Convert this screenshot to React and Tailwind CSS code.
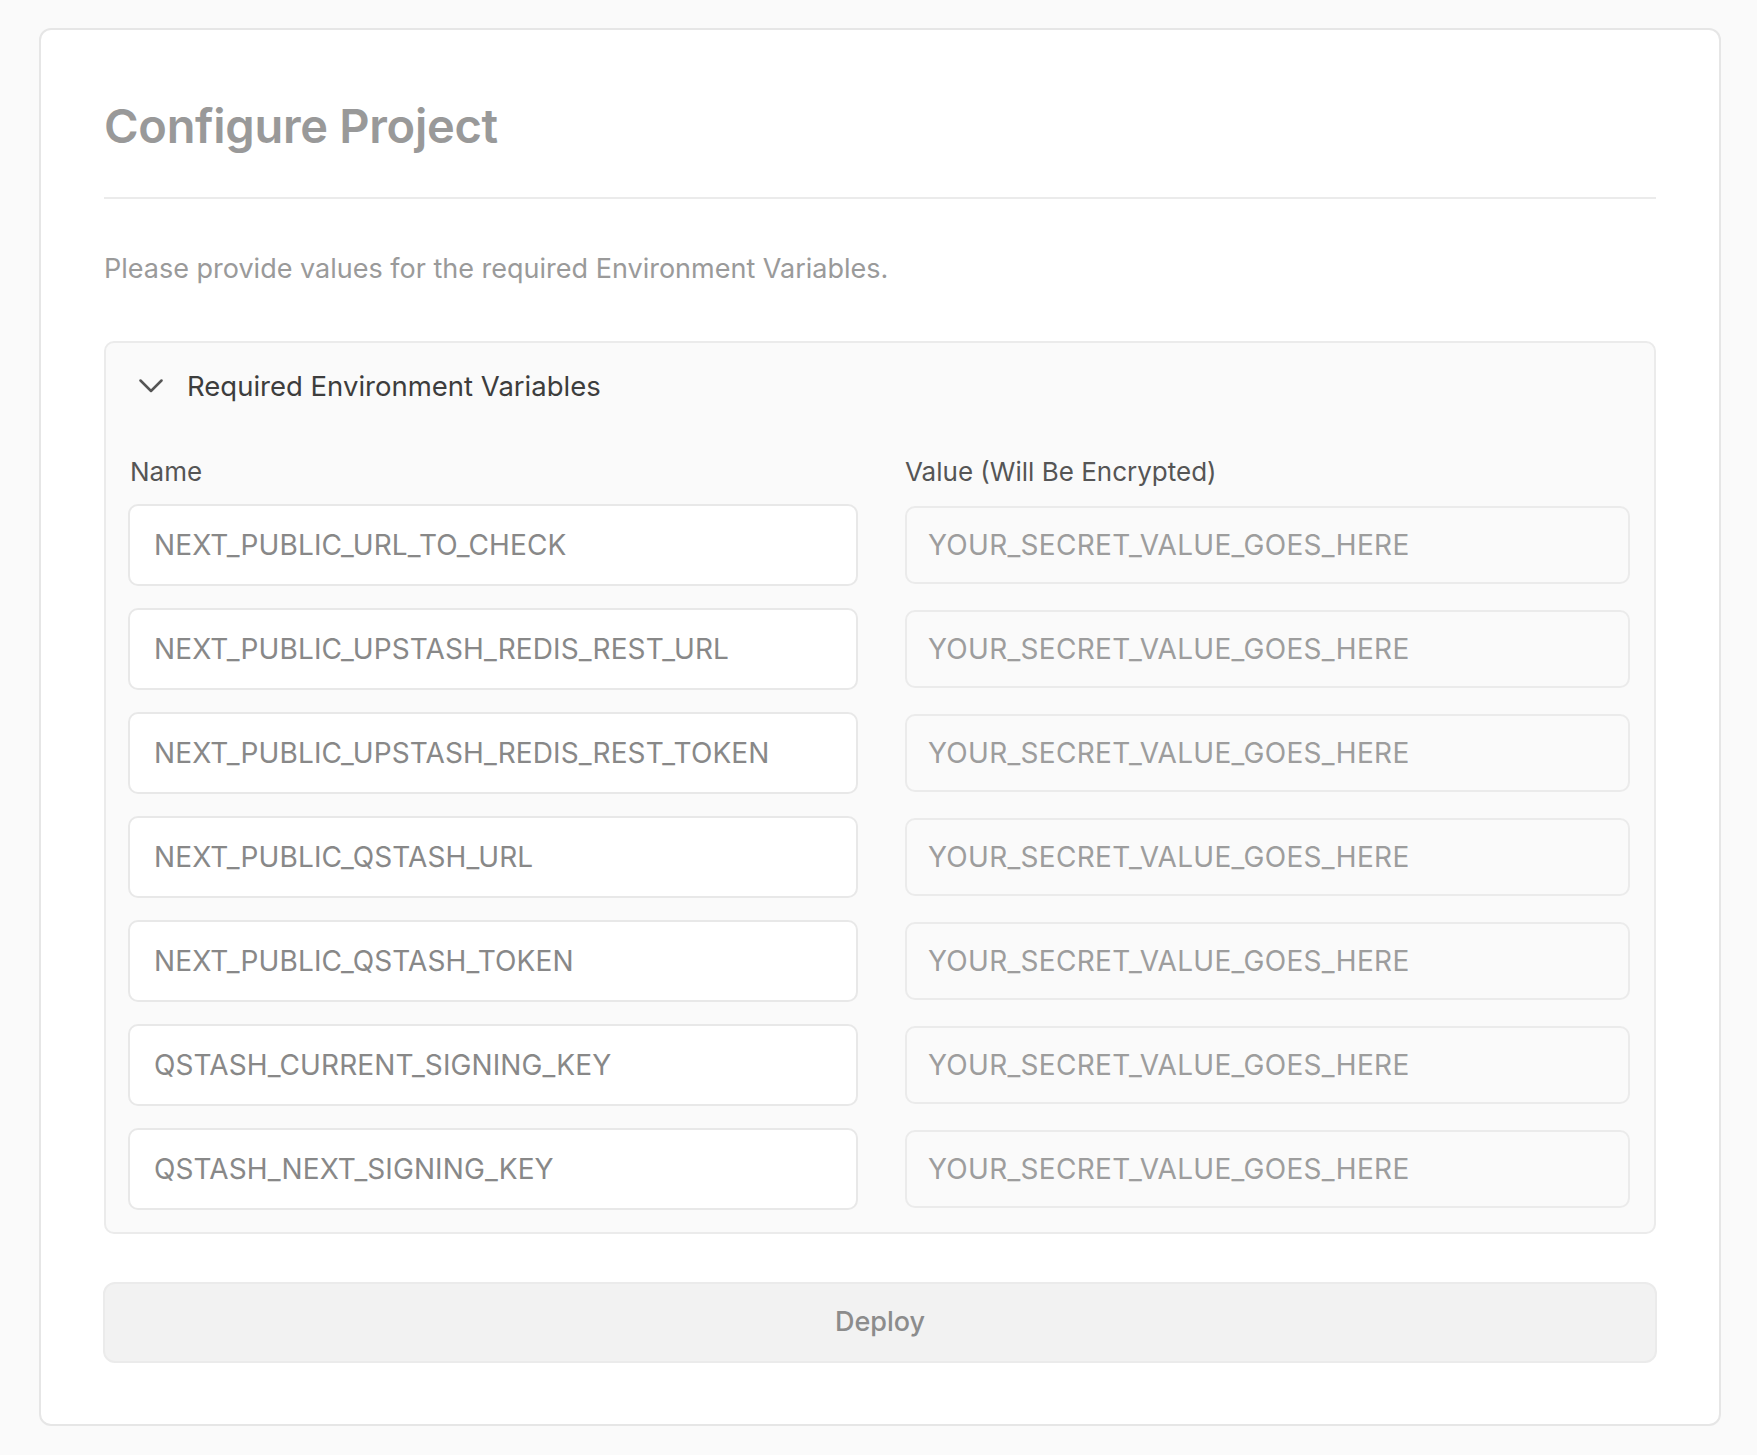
import { useState } from "react";

const envNames = [
  "NEXT_PUBLIC_URL_TO_CHECK",
  "NEXT_PUBLIC_UPSTASH_REDIS_REST_URL",
  "NEXT_PUBLIC_UPSTASH_REDIS_REST_TOKEN",
  "NEXT_PUBLIC_QSTASH_URL",
  "NEXT_PUBLIC_QSTASH_TOKEN",
  "QSTASH_CURRENT_SIGNING_KEY",
  "QSTASH_NEXT_SIGNING_KEY",
];

const Chevron = () => (
  <svg width="24" height="14" viewBox="0 0 24 14" fill="none">
    <polyline
      points="1.5,1.5 12,12 22.5,1.5"
      stroke="#555"
      strokeWidth="2.5"
      strokeLinecap="round"
      strokeLinejoin="round"
    />
  </svg>
);

const App = () => {
  const [open, setOpen] = useState(true);

  return (
    <div className="min-h-screen bg-[#fafafa] pt-[28px] pb-[28px] font-['Inter',sans-serif]">
      <div className="ml-[39px] w-[1682px] rounded-[12px] border-2 border-[#e6e6e6] bg-white px-[63px] pt-[67px] pb-[61px]">
        <h1 className="text-[47px] leading-[58px] font-semibold text-[#999] tracking-[-0.3px]">
          Configure Project
        </h1>
        <div className="mt-[42px] h-[2px] bg-[#ebebeb]" />
        <p className="mt-[52px] text-[27px] leading-[36px] text-[#9a9a9a]">
          Please provide values for the required Environment Variables.
        </p>

        <div className="mt-[54px] rounded-[10px] border-2 border-[#ebebeb] bg-[#fafafa] pl-[22px] pr-[24px] pt-[25px] pb-[22px]">
          <button
            type="button"
            className="flex items-center gap-[24px] pl-[11px] text-[27.5px] leading-[36px] text-[#3d3d3d]"
            onClick={() => setOpen(!open)}
          >
            <Chevron />
            Required Environment Variables
          </button>

          {open && (
            <div className="mt-[50px] grid grid-cols-[730px_1fr] gap-x-[47px] gap-y-[22px] items-center">
              <div className="text-[26px] leading-[36px] text-[#555] pl-[2px] -mb-[8px]">Name</div>
              <div className="text-[26px] leading-[36px] text-[#555] -mb-[8px]">Value (Will Be Encrypted)</div>
              {envNames.map((name) => (
                <div key={name} className="contents">
                  <div className="flex h-[82px] items-center rounded-[10px] border-2 border-[#e8e8e8] bg-white px-[24px] text-[28px] tracking-[0.1px] text-[#888]">
                    {name}
                  </div>
                  <div className="flex h-[78px] items-center rounded-[10px] border-2 border-[#ebebeb] bg-[#fafafa] px-[21px] text-[28px] tracking-[0.3px] text-[#9d9d9d]">
                    YOUR_SECRET_VALUE_GOES_HERE
                  </div>
                </div>
              ))}
            </div>
          )}
        </div>

        <button
          type="button"
          className="mt-[48px] -mx-[1px] flex h-[81px] w-[calc(100%+2px)] items-center justify-center rounded-[12px] border-2 border-[#ebebeb] bg-[#f2f2f2] text-[27px] font-medium text-[#8c8c8c]"
        >
          Deploy
        </button>
      </div>
    </div>
  );
};

export default App;
